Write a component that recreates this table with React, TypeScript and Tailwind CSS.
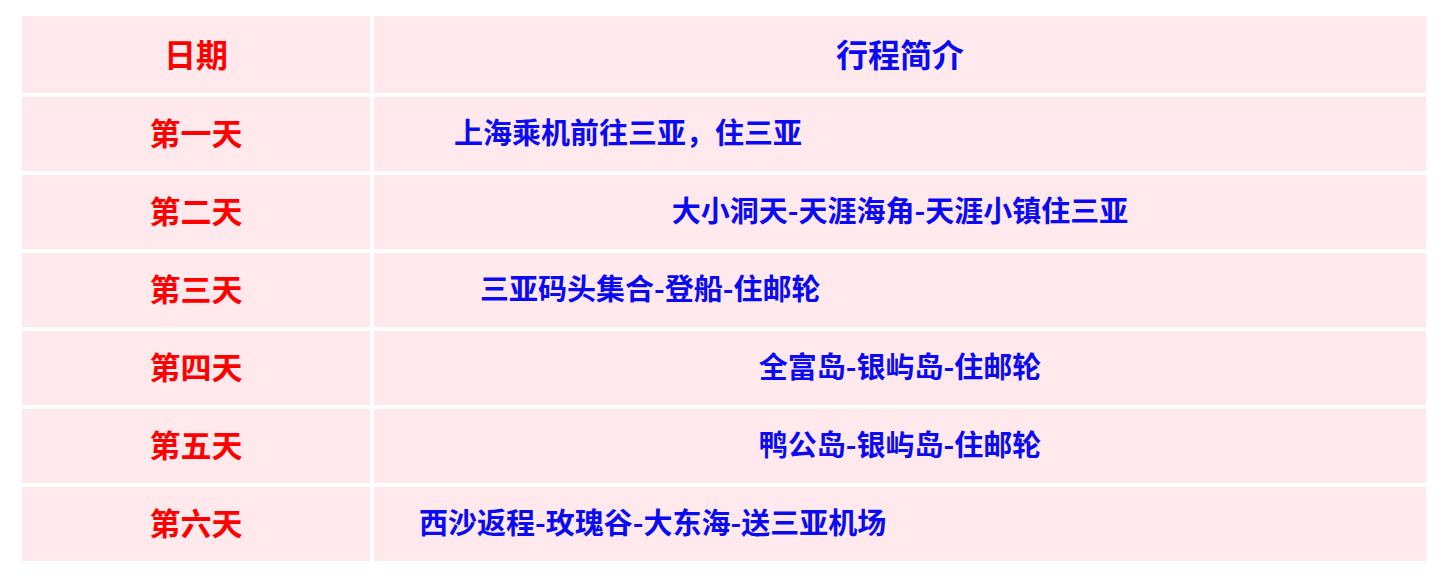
import React from 'react';

interface DayRow {
  day: string;
  plan: string;
  // some rows in the original sit left of centre
  align: string;
}

const rows: DayRow[] = [
  { day: '第一天', plan: '上海乘机前往三亚，住三亚', align: 'justify-start pl-[80px]' },
  { day: '第二天', plan: '大小洞天-天涯海角-天涯小镇住三亚', align: 'justify-center' },
  { day: '第三天', plan: '三亚码头集合-登船-住邮轮', align: 'justify-start pl-[106px]' },
  { day: '第四天', plan: '全富岛-银屿岛-住邮轮', align: 'justify-center' },
  { day: '第五天', plan: '鸭公岛-银屿岛-住邮轮', align: 'justify-center' },
  { day: '第六天', plan: '西沙返程-玫瑰谷-大东海-送三亚机场', align: 'justify-start pl-[45px]' },
];

const font = { fontFamily: '"Noto Sans CJK SC", "Noto Sans", sans-serif' };

const App: React.FC = () => {
  return (
    <div className="w-[1438px] h-[580px] bg-white pt-[16px] pl-[22px]" style={font}>
      <div className="grid w-[1404px] grid-cols-[348px_1fr] gap-[4px] font-bold">
        <div className="h-[77px] pb-[4px] bg-[#ffe9ec] flex items-center justify-center text-[32px] text-[#ff0000]">
          日期
        </div>
        <div className="h-[77px] pb-[4px] bg-[#ffe9ec] flex items-center justify-center text-[32px] text-[#0a0af5]">
          行程简介
        </div>
        {rows.map((r) => (
          <React.Fragment key={r.day}>
            <div className="h-[74px] pb-[4px] bg-[#ffe9ec] flex items-center justify-center text-[31px] text-[#ff0000]">
              {r.day}
            </div>
            <div className={`h-[74px] pb-[4px] bg-[#ffe9ec] flex items-center text-[29px] text-[#0a0af5] ${r.align}`}>
              {r.plan}
            </div>
          </React.Fragment>
        ))}
      </div>
    </div>
  );
};

export default App;
